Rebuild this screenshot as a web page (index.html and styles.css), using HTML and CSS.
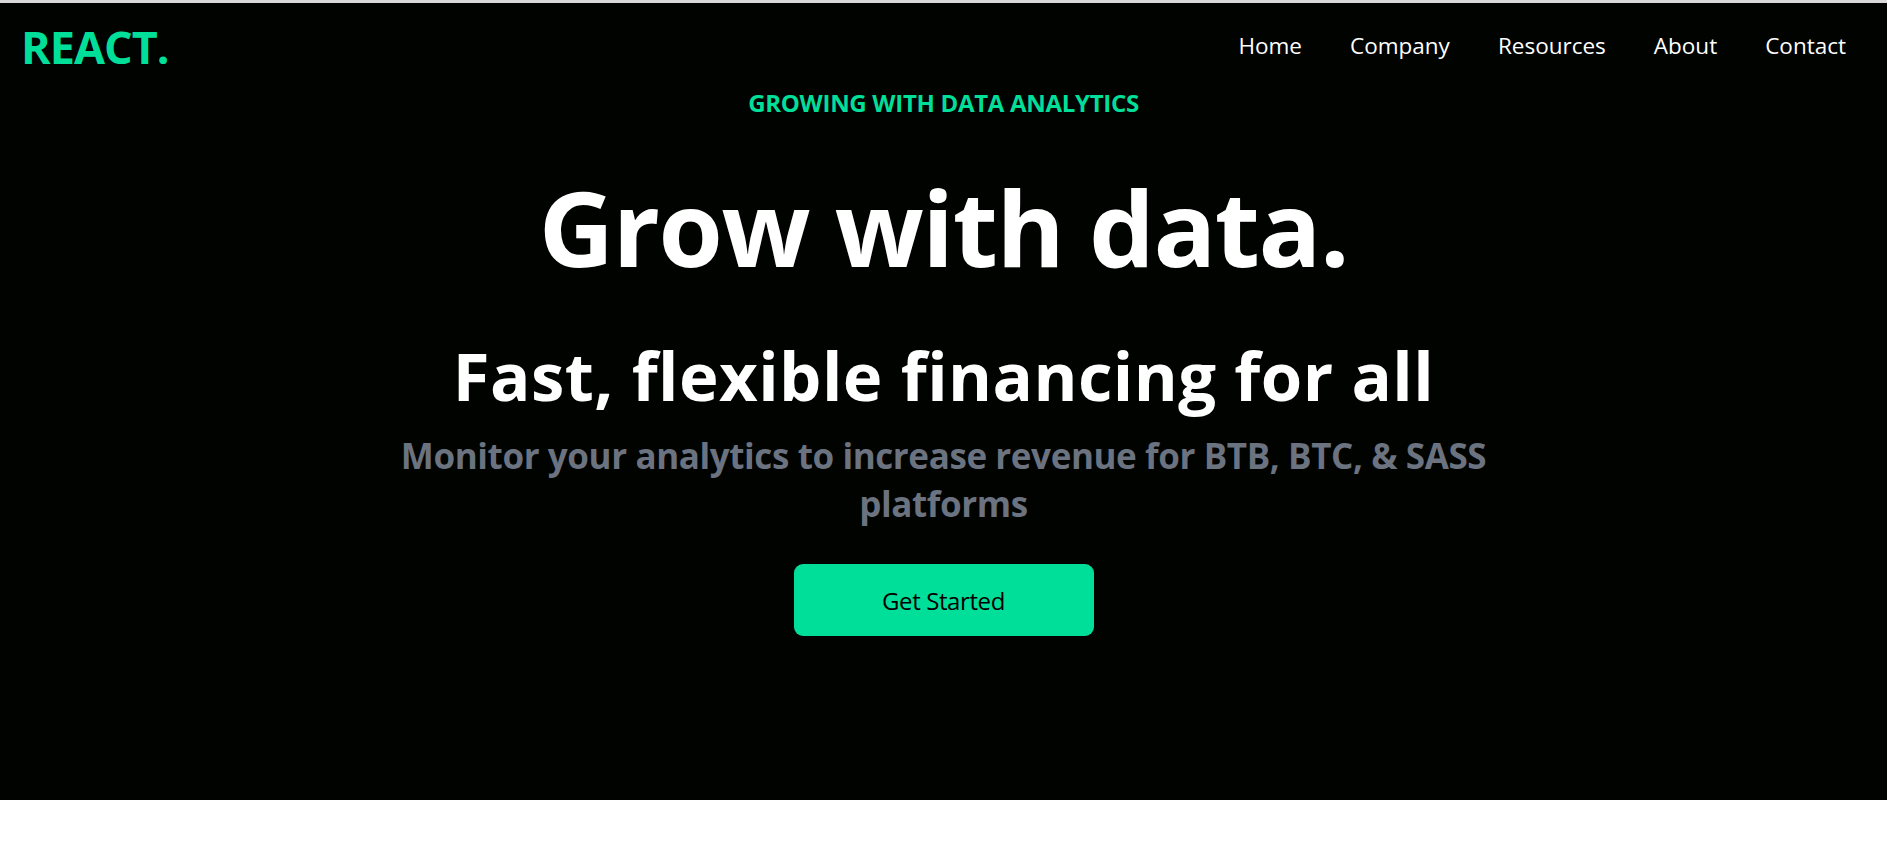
FILE: index.html
```html
<!DOCTYPE html>
<html lang="en">
<head>
<meta charset="utf-8">
<title>REACT. — Grow with data</title>
<link rel="stylesheet" href="styles.css">
</head>
<body>
<div class="topband"></div>
<div class="page">
  <nav class="nav">
    <h1 class="logo">REACT.</h1>
    <ul class="menu">
      <li class="menu-item">Home</li>
      <li class="menu-item">Company</li>
      <li class="menu-item">Resources</li>
      <li class="menu-item">About</li>
      <li class="menu-item">Contact</li>
    </ul>
  </nav>
  <section class="hero">
    <p class="tag">GROWING WITH DATA ANALYTICS</p>
    <h1 class="title">Grow with data.</h1>
    <div class="typed">Fast, flexible financing for all</div>
    <p class="sub">Monitor your analytics to increase revenue for BTB, BTC, &amp; SASS platforms</p>
    <button class="cta">Get Started</button>
  </section>
</div>
</body>
</html>
```

FILE: styles.css
```css
* { box-sizing: border-box; }
html, body { margin: 0; padding: 0; }
body {
  background: #ffffff;
  font-family: "Open Sans", "Noto Sans", sans-serif;
  color: #ffffff;
}
.topband {
  height: 3px;
  background: #d9d9d9;
}
.page {
  background: #000300;
  height: 797px;
}
.nav {
  height: 82px;
  display: flex;
  justify-content: space-between;
  align-items: flex-start;
  padding: 21px 17px 0 21px;
}
.logo {
  margin: 0;
  font-size: 45px;
  line-height: 45px;
  font-weight: 700;
  color: #00df9a;
  letter-spacing: -1px;
}
.menu {
  display: flex;
  list-style: none;
  margin: 4px 0 0 0;
  padding: 0;
}
.menu-item {
  padding: 0 24px;
  font-size: 22.5px;
  line-height: 36px;
  color: #ffffff;
  letter-spacing: 0;
}
.hero {
  display: flex;
  flex-direction: column;
  align-items: center;
  text-align: center;
}
.tag {
  margin: 0;
  font-size: 24px;
  line-height: 36px;
  font-weight: 700;
  color: #00df9a;
  letter-spacing: -0.3px;
}
.title {
  margin: 54px 0 0 0;
  font-size: 104px;
  line-height: 104px;
  font-weight: 700;
  letter-spacing: -1.4px;
}
.typed {
  margin-top: 63px;
  font-size: 67px;
  line-height: 67px;
  font-weight: 700;
  letter-spacing: 0.45px;
}
.sub {
  margin: 23px 0 0 0;
  width: 1200px;
  font-size: 35px;
  line-height: 48px;
  font-weight: 700;
  color: #6b7280;
  letter-spacing: -0.4px;
}
.cta {
  margin-top: 36px;
  width: 300px;
  height: 72px;
  border: 0;
  border-radius: 9px;
  background: #00df9a;
  color: #000000;
  font-family: "Open Sans", "Noto Sans", sans-serif;
  font-size: 24px;
  font-weight: 500;
  letter-spacing: -0.4px;
}
```
